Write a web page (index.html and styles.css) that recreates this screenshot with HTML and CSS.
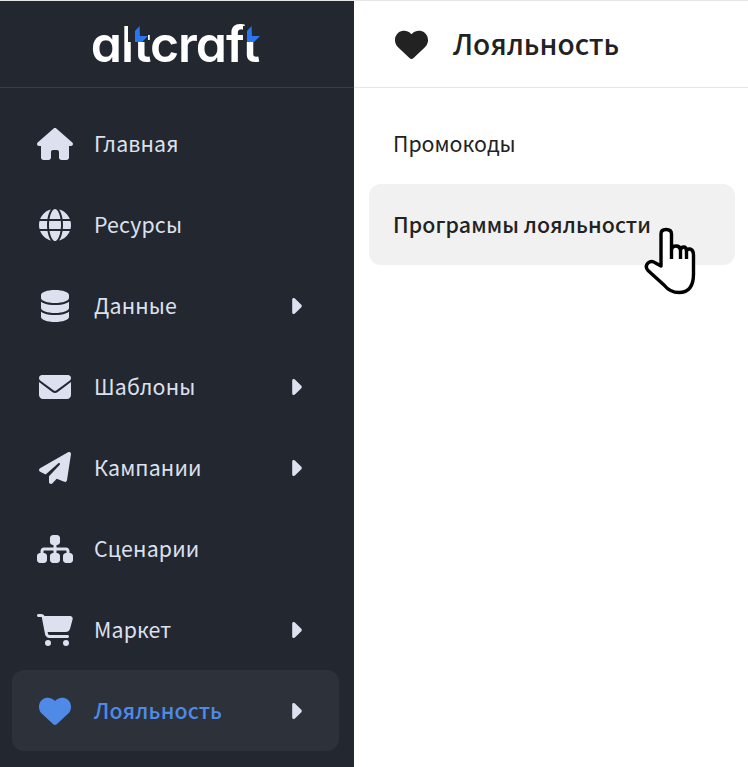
FILE: index.html
```html
<!DOCTYPE html>
<html lang="ru">
<head>
    <meta charset="UTF-8">
    <title>Altcraft</title>
    <link rel="stylesheet" href="styles.css">
</head>
<body>
    <aside class="sidebar">
        <div class="logo-bar">
            <div class="logo">
                altcraft
                <svg class="logo-flag flag-one" viewBox="-7 0 20 16"><rect class="flag-mask" x="-7" y="0" width="20" height="16"/><polygon points="4.500,0 0,5 0,16 7,16 13,10 5,10"/></svg>
                <svg class="logo-flag flag-two" viewBox="-7 0 20 16"><rect class="flag-mask" x="-4" y="0" width="17" height="16"/><polygon points="4.500,0 0,5 0,16 7,16 13,10 5,10"/></svg>
            </div>
        </div>
        <nav class="nav">
            <a class="nav-item">
                <span class="nav-icon"><svg viewBox="0 0 576 512"><path d="M575.8 255.5c0 18-15 32.1-32 32.1h-32l.7 160.2c0 2.7-.2 5.4-.5 8.1V472c0 22.1-17.9 40-40 40H456c-1.1 0-2.2 0-3.3-.1c-1.4 .1-2.8 .1-4.2 .1H416 392c-22.1 0-40-17.9-40-40V448 384c0-17.7-14.3-32-32-32H256c-17.7 0-32 14.3-32 32v64 24c0 22.1-17.9 40-40 40H160 128.1c-1.5 0-3-.1-4.5-.2c-1.2 .1-2.4 .2-3.6 .2H104c-22.1 0-40-17.9-40-40V360c0-.9 0-1.9 .1-2.8V287.6H32c-18 0-32-14-32-32.1c0-9 3-17 10-24L266.4 8c7-7 15-8 22-8s15 2 21 7L564.8 231.5c8 7 12 15 11 24z"/></svg></span>
                <span class="nav-label">Главная</span>
            </a>
            <a class="nav-item">
                <span class="nav-icon"><svg viewBox="0 0 512 512"><path d="M352 256c0 22.2-1.2 43.6-3.3 64H163.3c-2.2-20.4-3.3-41.8-3.3-64s1.2-43.6 3.3-64H348.7c2.2 20.4 3.3 41.8 3.3 64zm28.8-64H503.9c5.3 20.5 8.1 41.9 8.1 64s-2.8 43.5-8.1 64H380.8c2.1-20.6 3.2-42 3.2-64s-1.1-43.4-3.2-64zm112.6-32H376.7c-10-63.9-29.8-117.4-55.3-151.6c78.3 20.7 142 77.5 171.9 151.6zm-149.1 0H167.7c6.1-36.4 15.5-68.6 27-94.7c10.5-23.6 22.2-40.7 33.5-51.5C239.4 3.2 248.7 0 256 0s16.6 3.2 27.8 13.8c11.3 10.8 23 27.9 33.5 51.5c11.6 26 20.9 58.2 27 94.7zm-209 0H18.6C48.6 85.9 112.2 29.1 190.6 8.4C165.1 42.6 145.3 96.1 135.3 160zM8.1 192H131.2c-2.1 20.6-3.2 42-3.2 64s1.1 43.4 3.2 64H8.1C2.8 299.5 0 278.1 0 256s2.8-43.5 8.1-64zM194.7 446.6c-11.6-26-20.9-58.2-27-94.6H344.3c-6.1 36.4-15.5 68.6-27 94.6c-10.5 23.6-22.2 40.7-33.5 51.5C272.6 508.8 263.3 512 256 512s-16.6-3.2-27.8-13.8c-11.3-10.8-23-27.9-33.5-51.5zM135.3 352c10 63.9 29.8 117.4 55.3 151.6C112.2 482.9 48.6 426.1 18.6 352H135.3zm358.1 0c-30 74.1-93.6 130.9-171.9 151.6c25.5-34.2 45.2-87.7 55.3-151.6H493.4z"/></svg></span>
                <span class="nav-label">Ресурсы</span>
            </a>
            <a class="nav-item">
                <span class="nav-icon"><svg viewBox="0 0 448 512"><path d="M448 80v48c0 44.2-100.3 80-224 80S0 172.2 0 128V80C0 35.8 100.3 0 224 0S448 35.8 448 80zM393.2 214.7c20.8-7.4 39.9-16.9 54.8-28.6V288c0 44.2-100.3 80-224 80S0 332.2 0 288V186.1c14.9 11.8 34 21.2 54.8 28.6C99.7 230.7 159.5 240 224 240s124.3-9.3 169.2-25.3zM0 346.1c14.9 11.8 34 21.2 54.8 28.6C99.7 390.7 159.5 400 224 400s124.3-9.3 169.2-25.3c20.8-7.4 39.9-16.9 54.8-28.6V432c0 44.2-100.3 80-224 80S0 476.2 0 432V346.1z"/></svg></span>
                <span class="nav-label">Данные</span>
                <svg class="nav-caret" viewBox="64 96 192 320"><path d="M246.6 278.6c12.5-12.5 12.5-32.8 0-45.3l-128-128c-9.2-9.2-22.9-11.9-34.9-6.9s-19.8 16.6-19.8 29.6l0 256c0 12.9 7.8 24.6 19.8 29.6s25.7 2.2 34.9-6.9l128-128z"/></svg>
            </a>
            <a class="nav-item">
                <span class="nav-icon"><svg viewBox="0 0 512 512"><path d="M48 64C21.5 64 0 85.5 0 112c0 15.1 7.1 29.3 19.2 38.4L236.8 313.6c11.4 8.5 27 8.5 38.4 0L492.8 150.4c12.1-9.1 19.2-23.3 19.2-38.4c0-26.5-21.5-48-48-48H48zM0 176V384c0 35.3 28.7 64 64 64H448c35.3 0 64-28.7 64-64V176L294.4 339.2c-22.8 17.1-54 17.1-76.8 0L0 176z"/></svg></span>
                <span class="nav-label">Шаблоны</span>
                <svg class="nav-caret" viewBox="64 96 192 320"><path d="M246.6 278.6c12.5-12.5 12.5-32.8 0-45.3l-128-128c-9.2-9.2-22.9-11.9-34.9-6.9s-19.8 16.6-19.8 29.6l0 256c0 12.9 7.8 24.6 19.8 29.6s25.7 2.2 34.9-6.9l128-128z"/></svg>
            </a>
            <a class="nav-item">
                <span class="nav-icon"><svg viewBox="0 0 512 512"><path d="M498.1 5.6c10.1 7 15.4 19.1 13.5 31.2l-64 416c-1.5 9.7-7.4 18.2-16 23s-18.9 5.4-28 1.6L284 427.7l-68.5 74.1c-8.9 9.7-22.9 12.9-35.2 8.1S160 493.2 160 480V396.4c0-4 1.5-7.8 4.2-10.7L331.8 202.8c5.8-6.3 5.6-16-.4-22s-15.7-6.4-22-.7L106 360.8 17.7 316.6C7.1 311.3 .3 300.7 0 288.9s5.9-22.8 16.1-28.7l448-256c10.7-6.1 23.9-5.5 34 1.4z"/></svg></span>
                <span class="nav-label">Кампании</span>
                <svg class="nav-caret" viewBox="64 96 192 320"><path d="M246.6 278.6c12.5-12.5 12.5-32.8 0-45.3l-128-128c-9.2-9.2-22.9-11.9-34.9-6.9s-19.8 16.6-19.8 29.6l0 256c0 12.9 7.8 24.6 19.8 29.6s25.7 2.2 34.9-6.9l128-128z"/></svg>
            </a>
            <a class="nav-item">
                <span class="nav-icon"><svg viewBox="0 0 576 512"><path d="M208 80c0-26.5 21.5-48 48-48h64c26.5 0 48 21.5 48 48v64c0 26.5-21.5 48-48 48h-8v40H464c30.9 0 56 25.1 56 56v32h8c26.5 0 48 21.5 48 48v64c0 26.5-21.5 48-48 48H464c-26.5 0-48-21.5-48-48V368c0-26.5 21.5-48 48-48h8V288c0-4.4-3.6-8-8-8H312v40h8c26.5 0 48 21.5 48 48v64c0 26.5-21.5 48-48 48H256c-26.5 0-48-21.5-48-48V368c0-26.5 21.5-48 48-48h8V280H112c-4.4 0-8 3.6-8 8v32h8c26.5 0 48 21.5 48 48v64c0 26.5-21.5 48-48 48H48c-26.5 0-48-21.5-48-48V368c0-26.5 21.5-48 48-48h8V288c0-30.9 25.1-56 56-56H264V192h-8c-26.5 0-48-21.5-48-48V80z"/></svg></span>
                <span class="nav-label">Сценарии</span>
            </a>
            <a class="nav-item">
                <span class="nav-icon"><svg viewBox="0 0 576 512"><path d="M0 24C0 10.7 10.7 0 24 0H69.5c22 0 41.5 12.8 50.6 32h411c26.3 0 45.5 25 38.6 50.4l-41 152.3c-8.5 31.4-37 53.3-69.5 53.3H170.7l5.4 28.5c2.2 11.3 12.1 19.5 23.6 19.5H488c13.3 0 24 10.7 24 24s-10.7 24-24 24H199.7c-34.6 0-64.3-24.6-70.7-58.5L77.4 54.5c-.7-3.8-4-6.5-7.9-6.5H24C10.7 48 0 37.3 0 24zM128 464a48 48 0 1 1 96 0 48 48 0 1 1 -96 0zm336-48a48 48 0 1 1 0 96 48 48 0 1 1 0-96z"/></svg></span>
                <span class="nav-label">Маркет</span>
                <svg class="nav-caret" viewBox="64 96 192 320"><path d="M246.6 278.6c12.5-12.5 12.5-32.8 0-45.3l-128-128c-9.2-9.2-22.9-11.9-34.9-6.9s-19.8 16.6-19.8 29.6l0 256c0 12.9 7.8 24.6 19.8 29.6s25.7 2.2 34.9-6.9l128-128z"/></svg>
            </a>
            <a class="nav-item active">
                <span class="nav-icon"><svg viewBox="0 0 512 512"><path d="M47.6 300.4L228.3 469.1c7.5 7 17.4 10.9 27.7 10.9s20.2-3.9 27.7-10.9L464.4 300.4c30.4-28.3 47.6-68 47.6-109.5v-5.8c0-69.9-50.5-129.5-119.4-141C347 36.5 300.6 51.4 268 84L256 96 244 84c-32.6-32.6-79-47.5-124.6-39.9C50.5 55.6 0 115.2 0 185.1v5.8c0 41.5 17.2 81.2 47.6 109.5z"/></svg></span>
                <span class="nav-label">Лояльность</span>
                <svg class="nav-caret" viewBox="64 96 192 320"><path d="M246.6 278.6c12.5-12.5 12.5-32.8 0-45.3l-128-128c-9.2-9.2-22.9-11.9-34.9-6.9s-19.8 16.6-19.8 29.6l0 256c0 12.9 7.8 24.6 19.8 29.6s25.7 2.2 34.9-6.9l128-128z"/></svg>
            </a>
        </nav>
    </aside>

    <main class="panel">
        <div class="panel-head">
            <svg class="panel-icon" viewBox="0 0 512 512"><path d="M47.6 300.4L228.3 469.1c7.5 7 17.4 10.9 27.7 10.9s20.2-3.9 27.7-10.9L464.4 300.4c30.4-28.3 47.6-68 47.6-109.5v-5.8c0-69.9-50.5-129.5-119.4-141C347 36.5 300.6 51.4 268 84L256 96 244 84c-32.6-32.6-79-47.5-124.6-39.9C50.5 55.6 0 115.2 0 185.1v5.8c0 41.5 17.2 81.2 47.6 109.5z"/></svg>
            <h1 class="panel-title">Лояльность</h1>
        </div>
        <div class="sub-list">
            <a class="sub-item">Промокоды</a>
            <a class="sub-item current">Программы лояльности</a>
        </div>
    </main>

    <svg class="hand-cursor" viewBox="640 224 62 74">
        <path d="M661 266V234Q661 229.500 666 229.500Q671.500 229.500 671.500 234V249Q672.500 246 676 246Q680 246 680.500 250Q681 247 684 247Q686 247 686.500 251Q687 248.500 690 249Q693.500 250 693.500 255V274Q693.500 292.500 679 292.500Q670 292.500 664 285L648 270.500Q644.500 266.500 648 263Q651.500 260 655.500 263Z"/>
        <path d="M671.500 249V259M680.500 250V259M686.500 251V259" fill="none"/>
    </svg>
</body>
</html>
```

FILE: styles.css
```css
:root {
    --side-bg: #232730;
    --side-text: #dce0ef;
    --accent: #4e8ae6;
    --line: #e6e6e6;
    --text: #222222;
}

* {
    box-sizing: border-box;
}

html, body {
    height: 100%;
}

body {
    margin: 0;
    display: flex;
    overflow: hidden;
    font-family: "Noto Sans CJK JP", "Noto Sans", sans-serif;
    color: var(--text);
    background: #fff;
    border-top: 1px solid var(--line);
}

.sidebar {
    width: 354px;
    flex-shrink: 0;
    background: var(--side-bg);
}

.logo-bar {
    height: 87px;
    display: flex;
    justify-content: center;
    align-items: center;
    border-bottom: 1px solid #3a3e47;
}

.logo {
    position: relative;
    margin-right: 4px;
    font-family: "Inter", sans-serif;
    font-size: 50px;
    font-weight: 600;
    font-feature-settings: "cv11";
    letter-spacing: -1px;
    line-height: 1;
    color: #fff;
}

.logo-flag {
    position: absolute;
    top: 7px;
    width: 20px;
    height: 16px;
    fill: #2a75f0;
}

.flag-mask {
    fill: var(--side-bg);
}

.flag-one {
    left: 37px;
}

.flag-two {
    left: 149px;
}

.nav {
    padding: 15px 15px 0 12px;
}

.nav-item {
    height: 81px;
    display: flex;
    align-items: center;
    padding-left: 24px;
    border-radius: 12px;
    font-size: 21.33px;
    letter-spacing: 0.15px;
    color: var(--side-text);
}

.nav-item.active {
    background: #2d313a;
    color: var(--accent);
    font-weight: 500;
}

.nav-icon {
    width: 37px;
    height: 32px;
    margin-right: 21px;
    display: flex;
    justify-content: center;
    flex-shrink: 0;
}

.nav-icon svg {
    height: 32px;
    fill: var(--side-text);
}

.nav-item.active .nav-icon svg {
    fill: var(--accent);
}

.nav-label {
    flex: 1;
    margin-bottom: 2px;
}

.nav-caret {
    width: 10px;
    height: 16px;
    margin-right: 37px;
    fill: var(--side-text);
}

.panel {
    flex: 1;
}

.panel-head {
    height: 87px;
    display: flex;
    align-items: center;
    padding-left: 41px;
    border-bottom: 1px solid var(--line);
}

.panel-icon {
    width: 33px;
    height: 33px;
    margin-right: 25px;
    fill: var(--text);
}

.panel-title {
    margin: 0 0 2px;
    font-size: 28px;
    font-weight: 500;
}

.sub-list {
    padding: 15px 13px 0 15px;
}

.sub-item {
    height: 81px;
    display: flex;
    align-items: center;
    padding: 0 0 2px 24px;
    border-radius: 12px;
    font-size: 21.33px;
}

.sub-item.current {
    background: #f1f1f1;
    font-weight: 500;
    letter-spacing: 0.1px;
}

.hand-cursor {
    position: absolute;
    left: 640px;
    top: 224px;
    width: 62px;
    height: 74px;
    fill: #fff;
    stroke: #000;
    stroke-width: 3.4;
    stroke-linejoin: round;
}
```
